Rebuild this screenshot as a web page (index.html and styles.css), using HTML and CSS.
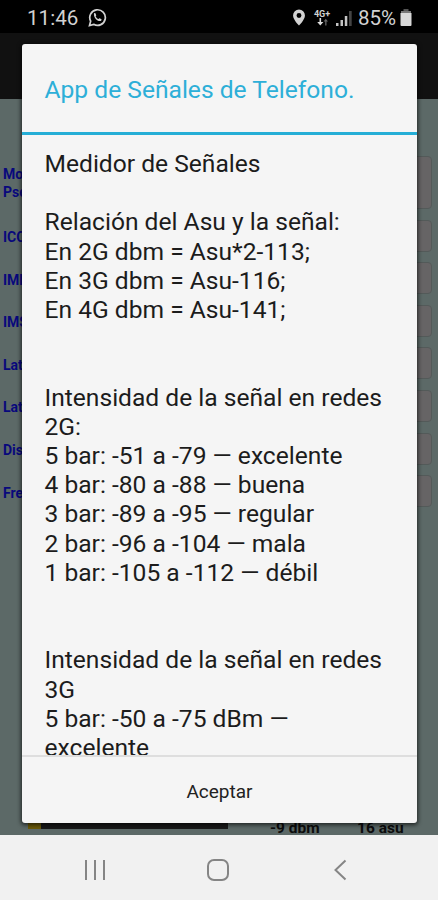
FILE: index.html
```
<!DOCTYPE html>
<html lang="es">
<head>
  <meta charset="UTF-8">
  <meta name="viewport" content="width=device-width, initial-scale=1.0">
  <title>App de Señales de Telefono</title>
  <link rel="stylesheet" href="styles.css">
</head>
<body>
  <div class="screen">
    <header class="status-bar">
      <span class="clock">11:46</span>
      <svg class="whatsapp" viewBox="0 0 20 20" fill="none" stroke="currentColor" stroke-width="1.8">
        <path d="M1.6 18.4l1.2-4.5A8.2 8.2 0 1 1 6 17.2z"/>
        <path d="M6.3 5.8c.4-.6 1.300-.7 1.600-.1l.8 1.800c.1.500-.7 1-.6 1.400.6 1.300 1.600 2.200 2.900 2.700.5.100.9-.9 1.400-.7l1.700.9c.5.300.1 1.400-.6 1.800-3 1.300-8-3.600-7.200-7.800z" fill="currentColor" stroke="none"/>
      </svg>
      <div class="status-right">
        <svg class="pin" viewBox="0 0 14 18">
          <path fill="currentColor" fill-rule="evenodd" d="M7 .5A6.300 6.300 0 0 0 .7 6.800C.7 11.300 7 17.500 7 17.500s6.300-6.200 6.300-10.700A6.300 6.300 0 0 0 7 .5zm0 3.800a2.600 2.600 0 1 1 0 5.200 2.600 2.600 0 0 1 0-5.200z"/>
        </svg>
        <div class="network">
          <span>4G+</span>
          <svg viewBox="0 0 12 8">
            <path d="M3.500 0v4H1.200L4.300 7.600 7.400 4H5.100V0z" fill="#ddd"/>
            <path d="M9.200 7.500V3.500H7.600L9.800.8 12 3.500h-1.500v4z" fill="#666"/>
          </svg>
        </div>
        <svg class="signal" viewBox="0 0 16 16">
          <path d="M0 13h2.500v3H0zM4.500 10H7v6H4.500zM8.800 6h2.500v10H8.800z" fill="#c4c4c4"/>
          <path d="M13 1h2.700v15H13z" fill="#444"/>
        </svg>
        <span class="percent">85%</span>
        <svg class="battery" viewBox="0 0 12 17">
          <path d="M3.500 0h5v2h-5z" fill="#555"/>
          <path d="M1 2h10v2H1z" fill="#777"/>
          <path d="M.5 4h11v12a1 1 0 0 1-1 1h-9a1 1 0 0 1-1-1z" fill="#d8d8d8"/>
        </svg>
      </div>
    </header>

    <main class="app">
      <div class="action-bar"></div>
      <div class="fields">
        <div class="row row-tall"><label>Mo<br>Pse</label><span class="field"></span></div>
        <div class="row"><label>ICC</label><span class="field"></span></div>
        <div class="row"><label>IME</label><span class="field"></span></div>
        <div class="row"><label>IMS</label><span class="field"></span></div>
        <div class="row"><label>Lat</label><span class="field"></span></div>
        <div class="row"><label>Lat</label><span class="field"></span></div>
        <div class="row"><label>Dis</label><span class="field"></span></div>
        <div class="row"><label>Fre</label><span class="field"></span></div>
      </div>
      <div class="meter">
        <span class="meter-bar"></span>
        <span class="dbm">-9 dbm</span>
        <span class="asu">16 asu</span>
      </div>
    </main>

    <nav class="nav-bar">
      <svg viewBox="0 0 24 24"><path d="M3 2v20M12 2v20M21 2v20"/></svg>
      <svg viewBox="0 0 24 24"><rect x="2" y="2" width="20" height="20" rx="6"/></svg>
      <svg viewBox="0 0 24 24"><path d="M16.500 2.500L6.500 12l10 9.500"/></svg>
    </nav>

    <section class="dialog" role="dialog">
      <h1 class="dialog-title">App de Señales de Telefono.</h1>
      <div class="dialog-body">Medidor de Señales

Relación del Asu y la señal:
En 2G dbm = Asu*2-113;
En 3G dbm = Asu-116;
En 4G dbm = Asu-141;


Intensidad de la señal en redes 2G:
5 bar: -51 a -79 — excelente
4 bar: -80 a -88 — buena
3 bar: -89 a -95 — regular
2 bar: -96 a -104 — mala
1 bar: -105 a -112 — débil


Intensidad de la señal en redes 3G
5 bar: -50 a -75 dBm — excelente</div>
      <button class="accept">Aceptar</button>
    </section>
  </div>
</body>
</html>
```
FILE: styles.css
```
* {
  box-sizing: border-box;
}

body {
  margin: 0;
  font-family: Roboto, "Liberation Sans", sans-serif;
}

.screen {
  position: relative;
  display: flex;
  flex-direction: column;
  height: 900px;
  overflow: hidden;
}

/* status bar */
.status-bar {
  display: flex;
  align-items: center;
  height: 33px;
  padding: 2px 26px 0 27px;
  background: #000;
  color: #d2d2d2;
}

.clock {
  width: 61px;
  font-size: 20.600px;
}

.whatsapp {
  width: 19px;
  height: 19px;
}

.status-right {
  display: flex;
  align-items: center;
  margin-left: auto;
}

.pin {
  width: 14px;
  height: 17px;
  margin-right: 7px;
}

.network {
  display: flex;
  flex-direction: column;
  align-items: center;
  width: 18px;
  margin-right: 5px;
  font-size: 9px;
  font-weight: 700;
  line-height: 8px;
}

.network svg {
  width: 12px;
  height: 8px;
}

.signal {
  width: 16px;
  height: 16px;
  margin-right: 6px;
}

.percent {
  width: 42px;
  font-size: 20.500px;
}

.battery {
  width: 12px;
  height: 17px;
}

/* screen behind the dialog */
.app {
  flex: 1;
  display: flex;
  flex-direction: column;
  overflow: hidden;
  background: #5c6967;
}

.action-bar {
  flex: none;
  height: 66px;
  background: #111;
}

.fields {
  display: flex;
  flex-direction: column;
  gap: 10.6px;
  padding: 57px 6px 0 3px;
}

.row {
  display: flex;
  align-items: center;
  height: 32px;
}

.row-tall {
  height: 53px;
}

.row label {
  width: 110px;
  padding-top: 3px;
  color: #08087c;
  font-size: 14px;
  font-weight: 700;
  line-height: 18px;
}

.row-tall label {
  padding-top: 1px;
}

.field {
  flex: 1;
  height: 100%;
  border: 1px solid #535a59;
  border-radius: 4px;
  background: #666465;
}

.meter {
  display: flex;
  align-items: flex-start;
  height: 15px;
  margin-top: auto;
  padding-left: 28px;
  color: #0c0c0c;
  font-size: 15.500px;
  font-weight: 700;
  line-height: 17px;
}

.meter-bar {
  width: 200px;
  height: 9px;
  background: linear-gradient(to right, #6b5a08 13px, #191919 13px);
}

.dbm {
  width: 87px;
  margin-left: 42px;
}

/* dialog */
.dialog {
  position: absolute;
  top: 44px;
  left: 22px;
  display: flex;
  flex-direction: column;
  width: 395px;
  height: 779px;
  border-radius: 3px;
  background: #f5f5f5;
  box-shadow: 0 1px 4px 1px rgba(0, 0, 0, 0.65);
}

.dialog-title {
  display: flex;
  align-items: center;
  height: 91px;
  margin: 0;
  padding: 2px 22.500px 0;
  border-bottom: 3px solid #25aed6;
  color: #2dafd8;
  font-size: 24.600px;
  font-weight: 400;
}

.dialog-body {
  flex: 1;
  min-height: 0;
  padding: 14px 22px 0 22.500px;
  overflow: hidden;
  color: #1c1c1c;
  font-size: 24.600px;
  line-height: 29.200px;
  white-space: pre-wrap;
}

.accept {
  height: 68px;
  padding: 2px 0 0;
  border: 0;
  border-top: 2px solid #dedede;
  background: none;
  color: #222;
  font-family: inherit;
  font-size: 19px;
}

/* navigation bar */
.nav-bar {
  display: flex;
  align-items: center;
  justify-content: center;
  gap: 99px;
  height: 65px;
  padding: 4px 3px 0 0;
  background: #f1f1f1;
}

.nav-bar svg {
  width: 24px;
  height: 24px;
  fill: none;
  stroke: #858585;
  stroke-width: 2;
}
```
